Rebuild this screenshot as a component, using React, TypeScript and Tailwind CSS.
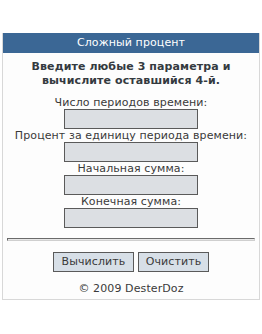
import React from 'react';

const FIELDS = [
  'Число периодов времени:',
  'Процент за единицу периода времени:',
  'Начальная сумма:',
  'Конечная сумма:',
];

export default function App() {
  return (
    <div className="min-h-screen bg-white pt-[33px] pl-[2px] text-[11px] text-[#3a3a3a] tracking-[0.1px] [font-family:'DejaVu_Sans',Verdana,sans-serif]">
      <div className="w-[258px] border border-t-0 border-[#d8d8d8] bg-[#fdfdfd]">
        {/* title bar */}
        <div className="h-[20px] bg-[#3b6795] text-white text-center leading-[20px] text-[11px]">
          Сложный процент
        </div>

        <p className="mt-[7px] text-center font-bold text-[11px] leading-[14px] text-[#343a40]">
          Введите любые 3 параметра и
          <br />
          вычислите оставшийся 4-й.
        </p>

        <div className="mt-[8px] flex flex-col items-center">
          {FIELDS.map((label) => (
            <label key={label} className="flex flex-col items-center">
              <span className="h-[13px] leading-[13px]">{label}</span>
              <input
                type="text"
                className="w-[134px] h-[20px] border border-[#5a5a5a] bg-[#dcdfe3] outline-none"
              />
            </label>
          ))}
        </div>

        <div className="mx-[4px] mt-[10px] h-[3px] border border-t-[#6b6b6b] border-l-[#6b6b6b] border-b-[#cfcfcf] border-r-[#cfcfcf] bg-[#e8e8e8]" />

        <div className="mt-[11px] flex justify-center gap-[4px]">
          <button className="w-[81px] h-[20px] border border-[#5a5a5a] bg-[#d7dfe7] text-[11px] text-[#3a3a3a]">
            Вычислить
          </button>
          <button className="w-[71px] h-[20px] border border-[#5a5a5a] bg-[#d7dfe7] text-[11px] text-[#3a3a3a]">
            Очистить
          </button>
        </div>

        <div className="mt-[10px] mb-[3px] text-center leading-[14px]">© 2009 DesterDoz</div>
      </div>
    </div>
  );
}
